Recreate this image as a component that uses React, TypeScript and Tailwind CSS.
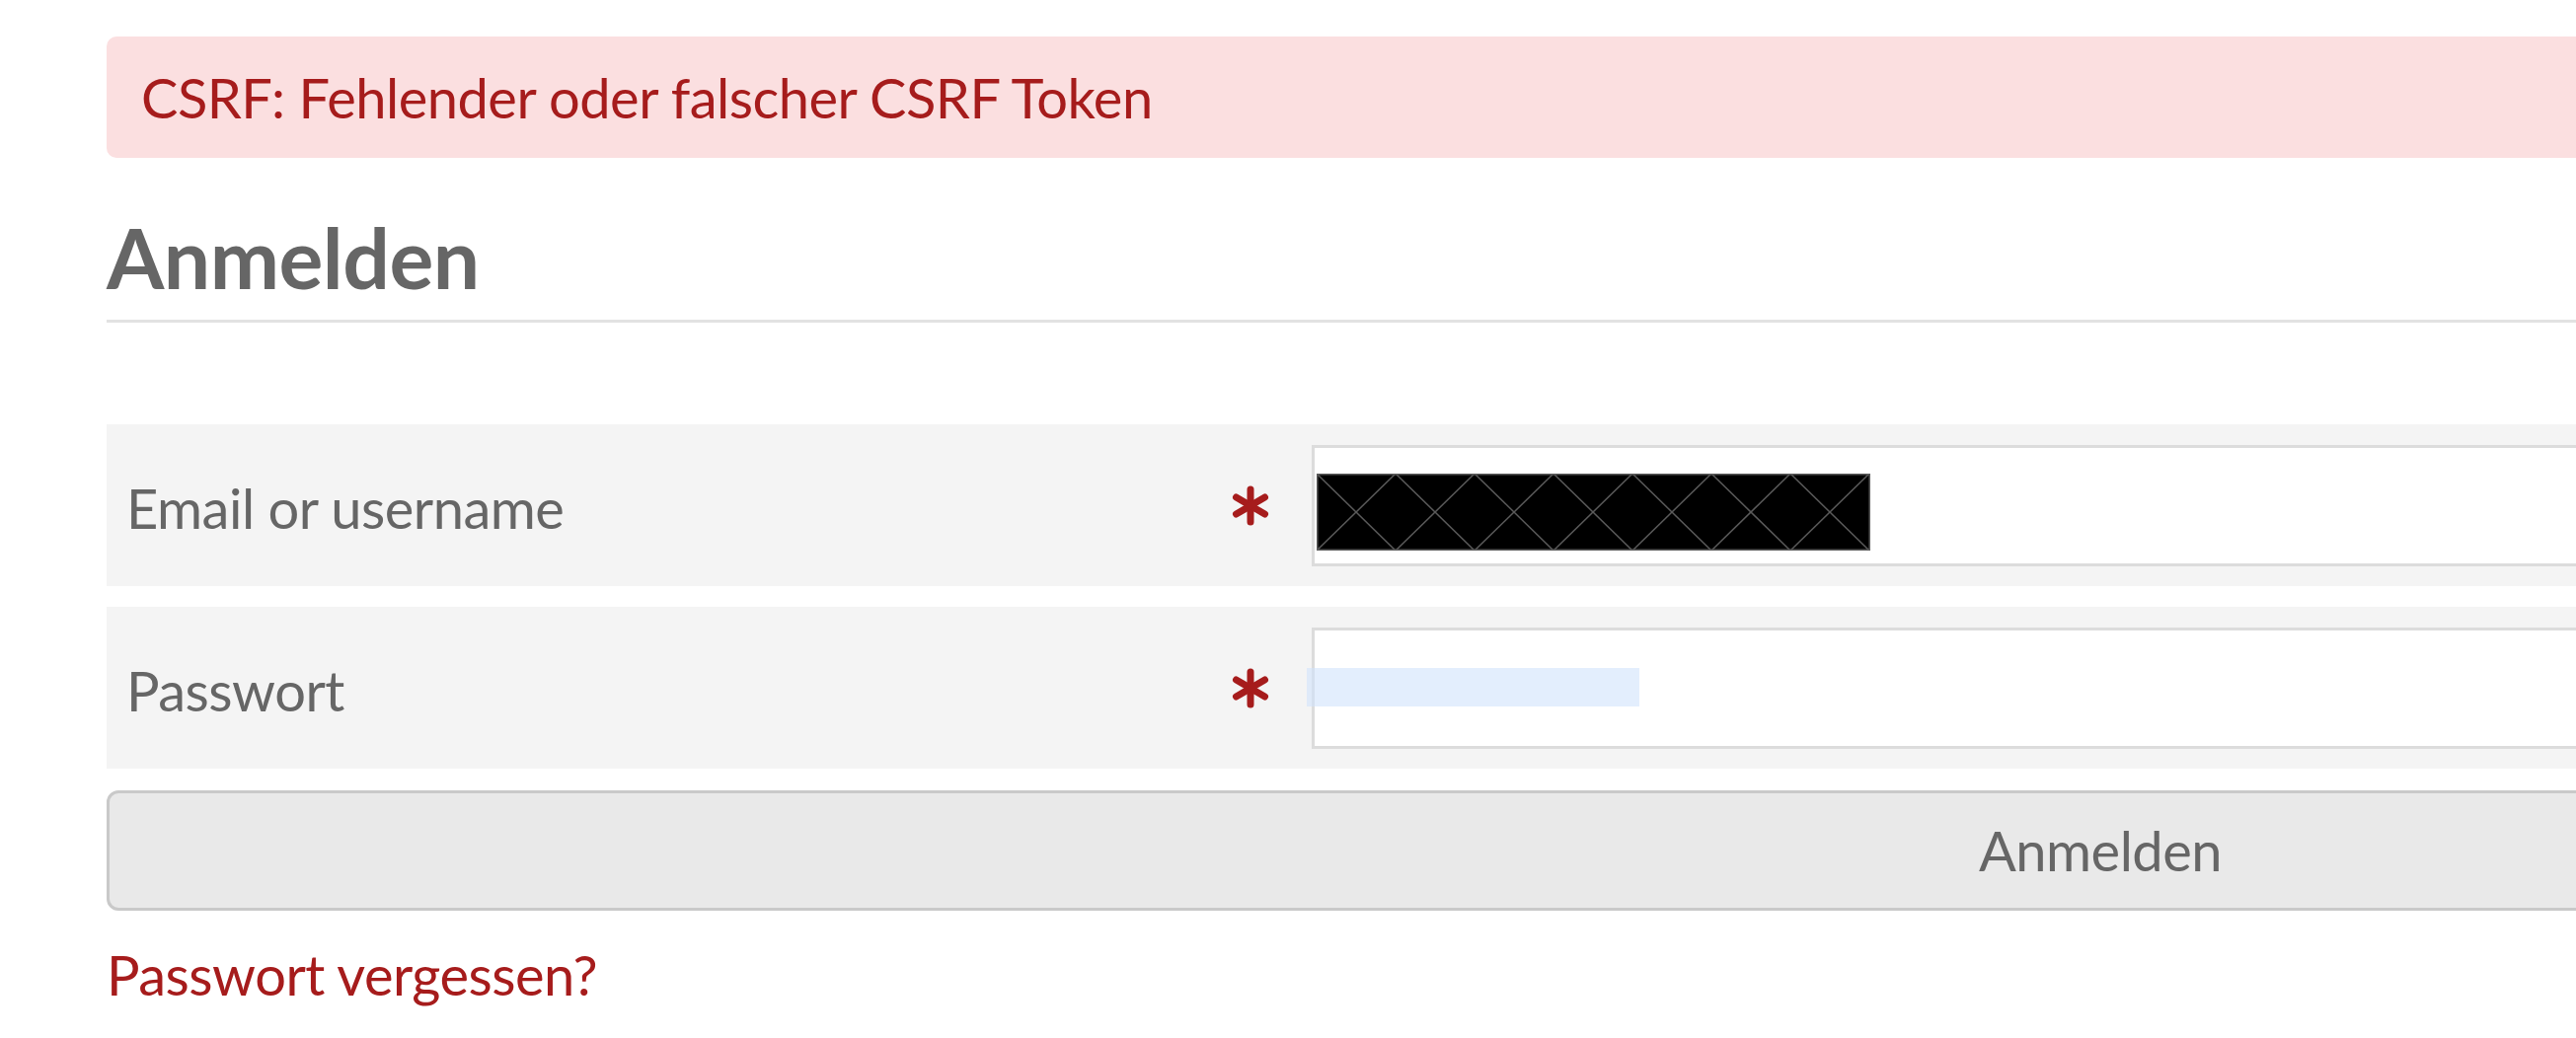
import React from "react";

const RED = "#a61c1c";

function Required() {
  // six-armed asterisk next to required fields
  return (
    <svg width="38" height="41" viewBox="0 0 38 41" className="shrink-0">
      <g stroke={RED} strokeWidth="7" strokeLinecap="round">
        <line x1="19" y1="4" x2="19" y2="37" />
        <line x1="4.5" y1="12" x2="33.5" y2="29" />
        <line x1="4.5" y1="29" x2="33.5" y2="12" />
      </g>
    </svg>
  );
}

function Redacted() {
  const boxes = [0, 1, 2, 3, 4, 5, 6];
  return (
    <svg width="561" height="78" viewBox="0 0 561 78">
      <rect x="0" y="0" width="561" height="78" fill="#000" />
      <g stroke="#5a5a5a" strokeWidth="1.5" fill="none">
        {boxes.map((i) => (
          <g key={i}>
            <line x1={i * 80} y1="0" x2={i * 80 + 80} y2="78" />
            <line x1={i * 80 + 80} y1="0" x2={i * 80} y2="78" />
          </g>
        ))}
        <rect x="0.75" y="0.75" width="559.5" height="76.5" />
      </g>
    </svg>
  );
}

export default function App() {
  return (
    <div className="w-full min-h-screen overflow-hidden bg-white tracking-[-0.5px]" style={{ fontFamily: "Lato, 'Open Sans', sans-serif" }}>
      <div className="ml-[108px] w-[4040px] pt-[37px]">
        {/* Error */}
        <div className="flex h-[123px] items-center rounded-[10px] bg-[#fbdfe0] px-[35px] text-[56px] text-[#a61c1c]">
          CSRF: Fehlender oder falscher CSRF Token
        </div>

        {/* Title */}
        <h1 className="mt-[55px] border-b-[3px] border-[#e2e2e2] pb-[17px] text-[84px] font-bold leading-[92px] text-[#666]">
          Anmelden
        </h1>

        {/* Form */}
        <div className="mt-[103px] flex flex-col gap-[21px]">
          <div className="flex h-[164px] items-center bg-[#f4f4f4] pl-[20px]">
            <label className="w-[1120px] pt-[6px] text-[56px] leading-none text-[#666]">Email or username</label>
            <Required />
            <div className="ml-[43px] mr-[40px] h-[123px] flex-1 border-[3px] border-[#dcdcdc] bg-white pl-[2px] pt-[26px]">
              <Redacted />
            </div>
          </div>

          <div className="flex h-[164px] items-center bg-[#f4f4f4] pl-[20px]">
            <label className="w-[1120px] pt-[6px] text-[56px] leading-none text-[#666]">Passwort</label>
            <Required />
            <div className="relative ml-[43px] mr-[40px] h-[123px] flex-1 border-[3px] border-[#dcdcdc] bg-white">
              <div className="absolute left-[-8px] top-[38px] h-[39px] w-[337px] bg-[#d0e2fb]/60" />
            </div>
          </div>
        </div>

        <button className="mt-[22px] flex h-[122px] w-full items-center justify-center rounded-[12px] border-[3px] border-[#c9c9c9] bg-[#e9e9e9] text-[56px] text-[#666]">
          Anmelden
        </button>

        <a href="#" className="mt-[31px] block text-[56px] leading-[1.2] text-[#a61c1c]">
          Passwort vergessen?
        </a>
      </div>
    </div>
  );
}
